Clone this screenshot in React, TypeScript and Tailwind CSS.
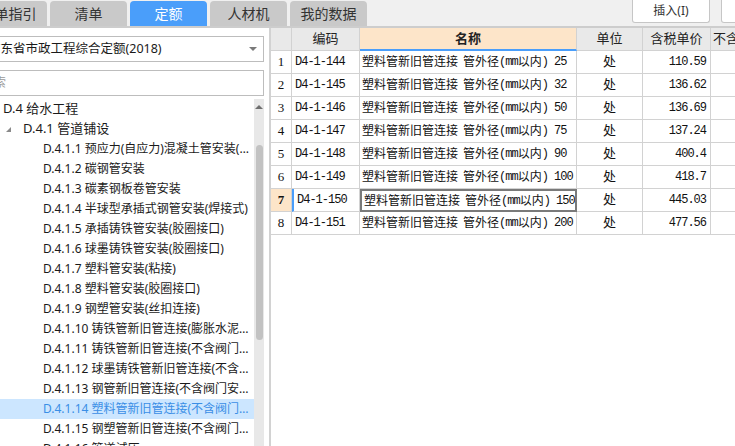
const tabs = ["清单指引", "清单", "定额", "人材机", "我的数据"];

const leaves = [
  "D.4.1.1 预应力(自应力)混凝土管安装(胶圈接口)",
  "D.4.1.2 碳钢管安装",
  "D.4.1.3 碳素钢板卷管安装",
  "D.4.1.4 半球型承插式钢管安装(焊接式)",
  "D.4.1.5 承插铸铁管安装(胶圈接口)",
  "D.4.1.6 球墨铸铁管安装(胶圈接口)",
  "D.4.1.7 塑料管安装(粘接)",
  "D.4.1.8 塑料管安装(胶圈接口)",
  "D.4.1.9 钢塑管安装(丝扣连接)",
  "D.4.1.10 铸铁管新旧管连接(膨胀水泥接口)",
  "D.4.1.11 铸铁管新旧管连接(不含阀门安装)",
  "D.4.1.12 球墨铸铁管新旧管连接(不含阀门)",
  "D.4.1.13 钢管新旧管连接(不含阀门安装)",
  "D.4.1.14 塑料管新旧管连接(不含阀门安装)",
  "D.4.1.15 钢塑管新旧管连接(不含阀门安装)",
  "D.4.1.16 管道试压",
];

const rows = [
  { code: "D4-1-144", size: "25", price: "110.59" },
  { code: "D4-1-145", size: "32", price: "136.62" },
  { code: "D4-1-146", size: "50", price: "136.69" },
  { code: "D4-1-147", size: "75", price: "137.24" },
  { code: "D4-1-148", size: "90", price: "400.4" },
  { code: "D4-1-149", size: "100", price: "418.7" },
  { code: "D4-1-150", size: "150", price: "445.03" },
  { code: "D4-1-151", size: "200", price: "477.56" },
];

const ui = "font-['Noto_Sans','Noto_Sans_CJK_SC',sans-serif]";
const mono = "font-['Liberation_Mono','Noto_Sans_CJK_SC',monospace]";

function TopBar() {
  return (
    <div className="h-[28px] shrink-0 bg-[#f0f0f0] border-b-2 border-[#cdcdcd] flex justify-between">
      <div className="flex items-end gap-[3px] -ml-[30px]">
        {tabs.map((t) => (
          <div
            key={t}
            className={`w-[77px] h-[25px] rounded-t-[4px] flex items-center justify-center text-[14px] leading-none ${
              t === "定额" ? "bg-[#4a9efa] text-white" : "bg-[#c9c9c9] text-[#333]"
            }`}
          >
            {t}
          </div>
        ))}
      </div>
      <div className="flex gap-[11px] items-start -mr-[20px]">
        <div className="w-[78px] h-[23px] bg-white border border-t-0 border-[#c6c6c6] rounded-b-[3px] flex items-center justify-center text-[12px] text-[#333]">
          插入(I)
        </div>
        <div className="w-[34px] h-[23px] bg-white border border-t-0 border-[#c6c6c6] rounded-b-[3px]" />
      </div>
    </div>
  );
}

function LeftPanel() {
  return (
    <div className="w-[271px] shrink-0 flex flex-col border-r-2 border-[#d2d2d2] bg-white">
      <div className="mt-[8px] w-[264px] h-[26px] border border-l-0 border-[#bdbdbd] flex items-center justify-between pr-[6px]">
        <span className="text-[12.5px] text-[#1a1a1a] -ml-[12px] whitespace-nowrap">广东省市政工程综合定额(2018)</span>
        <span className="w-0 h-0 border-x-[4px] border-x-transparent border-t-[4px] border-t-[#7a7a7a]" />
      </div>
      <div className="mt-[8px] w-[264px] h-[26px] border border-l-0 border-[#bdbdbd] flex items-center">
        <span className="text-[12px] text-[#9a9a9a] -ml-[18px]">搜索</span>
      </div>
      <div className="flex flex-1 mt-[3px] min-h-0">
        <div className="w-[254px] shrink-0 overflow-hidden text-[12px] text-[#1a1a1a]">
          <div className="h-[20px] flex items-center pl-[3px] whitespace-nowrap text-[13px]">D.4 给水工程</div>
          <div className="h-[20px] flex items-center pl-[6px] whitespace-nowrap text-[13px]">
            <span className="w-0 h-0 border-l-[5px] border-l-transparent border-b-[5px] border-b-[#8a8a8a] mr-[12px]" />
            D.4.1 管道铺设
          </div>
          {leaves.map((l) => {
            const sel = l.startsWith("D.4.1.14 ");
            return (
              <div
                key={l}
                className={`h-[20px] flex items-center pl-[43px] pr-[3px] ${sel ? "bg-[#cce6ff] text-[#3a8ee6]" : ""}`}
              >
                <span className="truncate">{l}</span>
              </div>
            );
          })}
        </div>
        <div className="w-[10px] bg-[#e8e8e8] flex flex-col items-center">
          <span className="mt-[6px] w-0 h-0 border-x-[4px] border-x-transparent border-b-[4px] border-b-[#6f6f6f]" />
          <div className="mt-[36px] w-[7px] h-[195px] rounded-[4px] bg-[#c2c2c2]" />
        </div>
      </div>
    </div>
  );
}

function Table() {
  const cols = "grid grid-cols-[21px_68px_217px_66px_68px_60px]";
  return (
    <div className="flex-1 overflow-hidden bg-white">
      <div className={`${cols} h-[23px] text-[13px] text-[#222]`}>
        <div className="bg-[#e9e9e9] border-r border-b border-[#d2d2d2]" />
        <div className="bg-[#e9e9e9] border-r border-b border-[#d2d2d2] flex items-center justify-center">编码</div>
        <div className="bg-[#fde5c9] border-r border-[#d2d2d2] border-b-2 border-b-[#4a9efa] flex items-center justify-center font-bold">名称</div>
        <div className="bg-[#e9e9e9] border-r border-b border-[#d2d2d2] flex items-center justify-center">单位</div>
        <div className="bg-[#e9e9e9] border-r border-b border-[#d2d2d2] flex items-center justify-center">含税单价</div>
        <div className="bg-[#e9e9e9] border-b border-[#d2d2d2] flex items-center pl-[2px] whitespace-nowrap overflow-hidden">不含税单价</div>
      </div>
      {rows.map((r, i) => {
        const sel = i === 6;
        return (
          <div key={r.code} className={`${cols} h-[23px] text-[12px] text-[#111]`}>
            <div
              className={`border-r border-b border-[#d2d2d2] flex items-center justify-center font-['Liberation_Serif',serif] text-[13px] ${
                sel ? "bg-[#fde5c9] font-bold" : "bg-white"
              }`}
            >
              {i + 1}
            </div>
            <div
              className={`border-r border-b border-[#d2d2d2] flex items-center pl-[3px] ${mono} tracking-[-1px] ${
                sel ? "border-l-2 border-l-[#4a9efa] pl-[1px]" : ""
              }`}
            >
              {r.code}
            </div>
            <div
              className={`flex items-center pl-[2px] whitespace-nowrap overflow-hidden ${
                sel ? "border-2 border-[#7a7a7a] pl-[0px]" : "border-r border-b border-[#d2d2d2]"
              }`}
            >
              <span className={ui}>塑料管新旧管连接</span>
              <span className={`${ui} ml-[5px]`}>管外径</span>
              <span className={`${mono} tracking-[-1px]`}>(mm</span>
              <span className={ui}>以内</span>
              <span className={`${mono} tracking-[-1px] whitespace-pre`}>) {r.size}</span>
            </div>
            <div className={`border-r border-b border-[#d2d2d2] flex items-center justify-center ${ui} text-[13px]`}>处</div>
            <div className={`border-r border-b border-[#d2d2d2] flex items-center justify-end pr-[4px] ${mono} tracking-[-1px]`}>
              {r.price}
            </div>
            <div className="border-b border-[#d2d2d2]" />
          </div>
        );
      })}
    </div>
  );
}

export default function App() {
  return (
    <div className={`w-[735px] h-[446px] overflow-hidden bg-white flex flex-col ${ui}`}>
      <TopBar />
      <div className="flex flex-1 min-h-0">
        <LeftPanel />
        <Table />
      </div>
    </div>
  );
}
